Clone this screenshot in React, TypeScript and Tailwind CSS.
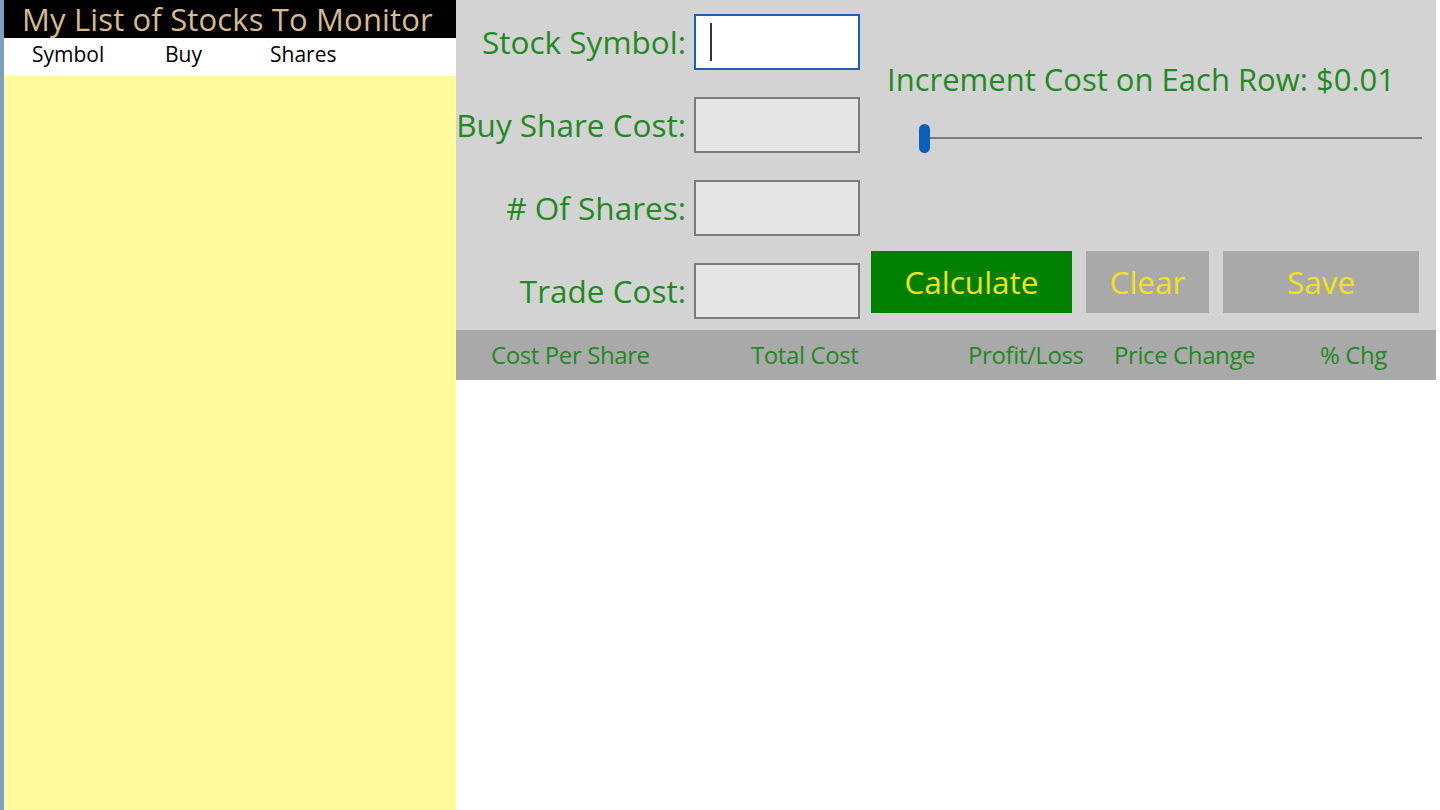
import React from "react";

const font = { fontFamily: '"Open Sans", "Noto Sans", sans-serif' };

function Field({ label, focused }: { label: string; focused?: boolean }) {
  return (
    <div className="flex items-center h-[56px]">
      <div className="w-[232px] pr-[2px] text-right text-[31.5px] leading-none text-[#1f8a1f] whitespace-nowrap">{label}</div>
      <div
        className={
          focused
            ? "ml-[6px] w-[166px] h-[56px] bg-white border-[2px] border-[#1e5fb4] flex items-center pl-[14px]"
            : "ml-[6px] w-[166px] h-[56px] bg-[#e5e5e5] border-[2px] border-[#7a7a7a]"
        }
      >
        {focused ? <div className="w-[2px] h-[38px] bg-[#333]" /> : null}
      </div>
    </div>
  );
}

export default function App() {
  return (
    <div className="w-[1440px] h-[810px] flex bg-white overflow-hidden" style={font}>
      <div className="w-[4px] h-full bg-[#7f9ec4]" />
      <div className="w-[452px] h-full flex flex-col">
        <div className="h-[38px] shrink-0 bg-black pl-[18px] text-[#d6bb8f] text-[31px] leading-[38px] tracking-[0.15px] whitespace-nowrap">
          My List of Stocks To Monitor
        </div>
        <div className="h-[38px] shrink-0 bg-white flex items-center pb-[6px] text-[21px] text-black leading-none">
          <span className="ml-[28px] w-[133px]">Symbol</span>
          <span className="w-[105px]">Buy</span>
          <span>Shares</span>
        </div>
        <div className="flex-1 bg-[#fffa9c]" />
      </div>
      <div className="w-[980px] h-full flex flex-col">
        <div className="h-[330px] bg-[#d3d3d3] flex">
          <div className="flex flex-col pt-[14px] gap-[27px]">
            <Field label="Stock Symbol:" focused />
            <Field label="Buy Share Cost:" />
            <Field label="# Of Shares:" />
            <Field label="Trade Cost:" />
          </div>
          <div className="flex-1 flex flex-col pl-[11px]">
            <div className="pt-[64px] pl-[16px] text-[31px] leading-none text-[#1f8a1f] whitespace-nowrap">
              Increment Cost on Each Row: $0.01
            </div>
            <div className="relative mt-[28px] ml-[48px] mr-[14px] h-[30px] flex items-center">
              <div className="w-full h-[2px] bg-[#7a7a7a]" />
              <div className="absolute left-0 top-[1px] w-[11px] h-[29px] rounded-full bg-[#0a5fbf]" />
            </div>
            <div className="mt-[98px] flex gap-[14px]">
              <div className="w-[201px] h-[62px] bg-[#008000] flex items-center justify-center text-[#f2e21b] text-[31.5px] leading-none">Calculate</div>
              <div className="w-[123px] h-[62px] bg-[#a9a9a9] flex items-center justify-center text-[#f2e21b] text-[31.5px] leading-none">Clear</div>
              <div className="w-[196px] h-[62px] bg-[#a9a9a9] flex items-center justify-center text-[#f2e21b] text-[31.5px] leading-none">Save</div>
            </div>
          </div>
        </div>
        <div className="h-[50px] bg-[#a9a9a9] flex items-center text-[24px] leading-none text-[#1f8a1f] whitespace-nowrap tracking-[-0.4px]">
          <span className="ml-[35px] w-[260px]">Cost Per Share</span>
          <span className="w-[217px]">Total Cost</span>
          <span className="w-[146px]">Profit/Loss</span>
          <span className="w-[206px]">Price Change</span>
          <span>% Chg</span>
        </div>
        <div className="flex-1 bg-white" />
      </div>
    </div>
  );
}
